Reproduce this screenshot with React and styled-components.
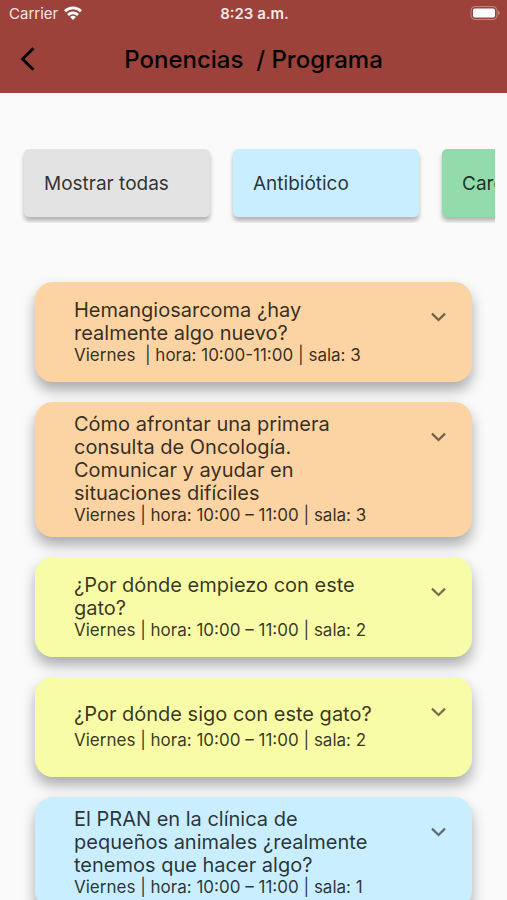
import React from 'react';
import styled, { createGlobalStyle } from 'styled-components';

const Colors = {
  Header: '#9c423a',
  Page: '#fafafa',
  Gray: '#e3e3e3',
  Blue: '#c9eeff',
  Green: '#91dcaa',
  Orange: '#fcd3a2',
  Yellow: '#f9fca6',
};

const categories = [
  { name: 'Mostrar todas', color: Colors.Gray },
  { name: 'Antibiótico', color: Colors.Blue },
  { name: 'Cardiología', color: Colors.Green },
];

const talks = [
  {
    title: 'Hemangiosarcoma ¿hay realmente algo nuevo?',
    info: 'Viernes  | hora: 10:00-11:00 | sala: 3',
    color: Colors.Orange,
  },
  {
    title: 'Cómo afrontar una primera consulta de Oncología. Comunicar y ayudar en situaciones difíciles',
    info: 'Viernes | hora: 10:00 – 11:00 | sala: 3',
    color: Colors.Orange,
  },
  {
    title: '¿Por dónde empiezo con este gato?',
    info: 'Viernes | hora: 10:00 – 11:00 | sala: 2',
    color: Colors.Yellow,
  },
  {
    title: '¿Por dónde sigo con este gato?',
    info: 'Viernes | hora: 10:00 – 11:00 | sala: 2',
    color: Colors.Yellow,
  },
  {
    title: 'El PRAN en la clínica de pequeños animales ¿realmente tenemos que hacer algo?',
    info: 'Viernes | hora: 10:00 – 11:00 | sala: 1',
    color: Colors.Blue,
  },
];

const WifiIcon = () => (
  <svg width="18" height="14" viewBox="0 0 18 14" fill="none" stroke="#fff" strokeWidth="2.8" aria-hidden="true">
    <path d="M1 5.2a11.5 11.5 0 0 1 16 0" />
    <path d="M4 8.9a7.2 7.2 0 0 1 10 0" />
    <path d="M9 14 6.1 11.1a4.1 4.1 0 0 1 5.8 0z" fill="#fff" stroke="none" />
  </svg>
);

const BatteryIcon = () => (
  <svg width="30" height="14" viewBox="0 0 30 14" aria-hidden="true">
    <rect x="1" y="0.5" width="26" height="13" rx="4" fill="none" stroke="#fff" strokeOpacity="0.35" />
    <rect x="3" y="2.5" width="22" height="9" rx="1.8" fill="#fff" />
    <path d="M28.2 4.8v4.4a2.4 2.4 0 0 0 0-4.4z" fill="#fff" fillOpacity="0.45" />
  </svg>
);

const BackIcon = () => (
  <svg width="16" height="24" viewBox="0 0 16 24" fill="none" stroke="#000" strokeWidth="2.8" aria-hidden="true">
    <path d="M14.5 1.2 3.5 12l11 10.8" />
  </svg>
);

const ChevronIcon = () => (
  <svg width="16" height="10" viewBox="0 0 16 10" fill="none" stroke="#000" strokeOpacity="0.55" strokeWidth="2.2" aria-hidden="true">
    <path d="M2 1.6 8.5 8 15 1.6" />
  </svg>
);

const App = () => (
  <Screen>
    <GlobalStyle />
    <Header>
      <StatusBar>
        <Carrier>
          Carrier
          <WifiIcon />
        </Carrier>
        <Clock>8:23 a.m.</Clock>
        <Battery>
          <BatteryIcon />
        </Battery>
      </StatusBar>
      <NavBar>
        <BackButton type="button" aria-label="Volver">
          <BackIcon />
        </BackButton>
        <Title>{'Ponencias  / Programa'}</Title>
      </NavBar>
    </Header>
    <Categories>
      {categories.map(({ name, color }) => (
        <Category key={name} type="button" $color={color}>
          {name}
        </Category>
      ))}
    </Categories>
    <Talks>
      {talks.map(({ title, info, color }) => (
        <Talk key={title} $color={color}>
          <TalkText>
            <TalkTitle>{title}</TalkTitle>
            <TalkInfo>{info}</TalkInfo>
          </TalkText>
          <ExpandButton type="button" aria-label="Mostrar detalles">
            <ChevronIcon />
          </ExpandButton>
        </Talk>
      ))}
    </Talks>
  </Screen>
);

const GlobalStyle = createGlobalStyle`
  * {
    box-sizing: border-box;
  }
  body {
    margin: 0;
    background-color: ${Colors.Page};
    font-family: Inter, Roboto, sans-serif;
  }
  button {
    border: 0;
    padding: 0;
    background: none;
    font-family: inherit;
    cursor: pointer;
  }
`;

const Screen = styled.div`
  display: flex;
  flex-direction: column;
  height: 100vh;
  overflow: hidden;
`;

const Header = styled.header`
  flex: none;
  background-color: ${Colors.Header};
`;

const StatusBar = styled.div`
  display: grid;
  grid-template-columns: 1fr auto 1fr;
  align-items: center;
  height: 26px;
  padding: 0 7px 0 9px;
  color: rgba(255, 255, 255, .9);
  font-size: 15px;
`;

const Carrier = styled.div`
  display: flex;
  align-items: center;
  gap: 6px;
`;

const Clock = styled.div`
  font-weight: 600;
`;

const Battery = styled.div`
  display: flex;
  justify-content: flex-end;
`;

const NavBar = styled.div`
  display: grid;
  grid-template-columns: 56px 1fr 56px;
  align-items: center;
  height: 67px;
  padding-bottom: 1px;
`;

const BackButton = styled.button`
  display: flex;
  align-items: center;
  height: 48px;
  padding-left: 19px;
`;

const Title = styled.h1`
  margin: 0;
  color: #000;
  font-size: 24px;
  font-weight: 500;
  text-align: center;
  white-space: pre;
`;

const Categories = styled.nav`
  display: flex;
  flex: none;
  gap: 23px;
  margin: 46px 12px 0;
  padding: 10px 12px 6px;
  overflow-x: auto;
  scrollbar-width: none;
`;

const Category = styled.button`
  flex: 0 0 186px;
  height: 68px;
  padding: 0 20px;
  border-radius: 5px;
  background-color: ${({ $color }) => $color};
  box-shadow: 0 4px 4px rgba(0, 0, 0, .28);
  color: rgba(0, 0, 0, .8);
  font-size: 19px;
  text-align: left;
`;

const Talks = styled.main`
  display: flex;
  flex: 1;
  flex-direction: column;
  gap: 20px;
  min-height: 0;
  margin-top: 39px;
  padding: 20px 35px;
  overflow-y: auto;
  scrollbar-width: none;
`;

const Talk = styled.article`
  display: flex;
  flex: none;
  align-items: center;
  justify-content: space-between;
  min-height: 100px;
  padding: 11px 22px 12px 39px;
  border-radius: 18px;
  background-color: ${({ $color }) => $color};
  box-shadow: 0 8px 14px rgba(0, 0, 0, .32);
`;

const TalkText = styled.div`
  display: flex;
  flex: 0 1 300px;
  flex-direction: column;
  justify-content: space-between;
  min-height: 47px;
`;

const TalkTitle = styled.h2`
  margin: 0;
  color: rgba(0, 0, 0, .8);
  font-size: 20px;
  font-weight: 400;
  line-height: 23px;
`;

const TalkInfo = styled.p`
  margin: 0;
  color: rgba(0, 0, 0, .8);
  font-size: 17px;
  line-height: 20px;
  white-space: pre;
`;

const ExpandButton = styled.button`
  display: flex;
  align-self: flex-start;
  align-items: center;
  justify-content: center;
  width: 24px;
  height: 48px;
`;

export default App;
